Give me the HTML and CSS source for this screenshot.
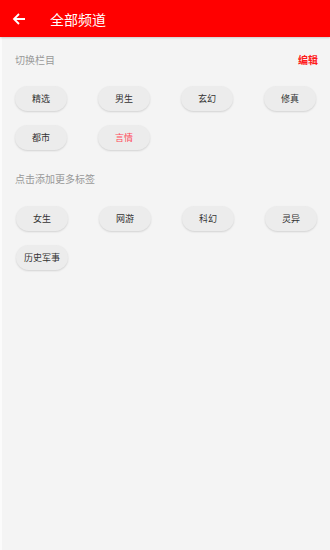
FILE: index.html
```html
<!DOCTYPE html>
<html lang="zh">
<head>
<meta charset="utf-8">
<link rel="stylesheet" href="styles.css">
</head>
<body>
<div class="app">
  <header class="topbar">
    <svg class="back" width="14" height="14" viewBox="0 0 14 14"><path d="M13 7H2M7 2L2 7l5 5" fill="none" stroke="#fff" stroke-width="1.8"/></svg>
    <span class="title">全部频道</span>
  </header>
  <main class="content">
    <div class="section-head">
      <span class="label">切换栏目</span>
      <span class="edit">编辑</span>
    </div>
    <div class="chips">
      <span class="chip">精选</span>
      <span class="chip">男生</span>
      <span class="chip">玄幻</span>
      <span class="chip">修真</span>
      <span class="chip">都市</span>
      <span class="chip active">言情</span>
    </div>
    <div class="section-head second">
      <span class="label">点击添加更多标签</span>
    </div>
    <div class="chips">
      <span class="chip">女生</span>
      <span class="chip">网游</span>
      <span class="chip">科幻</span>
      <span class="chip">灵异</span>
      <span class="chip">历史军事</span>
    </div>
  </main>
</div>
</body>
</html>
```
FILE: styles.css
```css
html, body {
  margin: 0;
  padding: 0;
  height: 100%;
}
body {
  font-family: "Noto Sans CJK SC", "Noto Sans", sans-serif;
  background: #f4f4f4;
}
.app {
  min-height: 550px;
  border-left: 2px solid #fbfbfb;
  background: #f4f4f4;
}
.topbar {
  height: 37px;
  background: #ff0000;
  display: flex;
  align-items: center;
  box-shadow: 0 1px 2px rgba(0,0,0,0.18);
  margin-left: -2px;
}
.back {
  margin-left: 12px;
  width: 14px;
  height: 14px;
}
.title {
  margin-left: 24px;
  color: #fff;
  font-size: 14px;
  line-height: 1;
}
.content {
  padding: 0 12px 0 13px;
}
.section-head {
  display: flex;
  justify-content: space-between;
  align-items: center;
  height: 18px;
  margin-top: 13px;
}
.section-head.second {
  margin-top: 19px;
}
.label {
  font-size: 10px;
  color: #999;
}
.edit {
  font-size: 10px;
  color: #ff1a1a;
  font-weight: bold;
}
.chips {
  display: grid;
  grid-template-columns: repeat(4, 52px);
  column-gap: 31px;
  row-gap: 14px;
  margin-top: 18px;
}
.section-head.second + .chips {
  margin-top: 19px;
  padding-left: 1px;
}
.chip {
  height: 25px;
  border-radius: 12.5px;
  background: #ececec;
  box-shadow: 0 1px 2px rgba(0,0,0,0.14);
  display: flex;
  align-items: center;
  justify-content: center;
  font-size: 9px;
  color: #333;
  white-space: nowrap;
}
.chip.active {
  color: #ff4a5a;
}
```
